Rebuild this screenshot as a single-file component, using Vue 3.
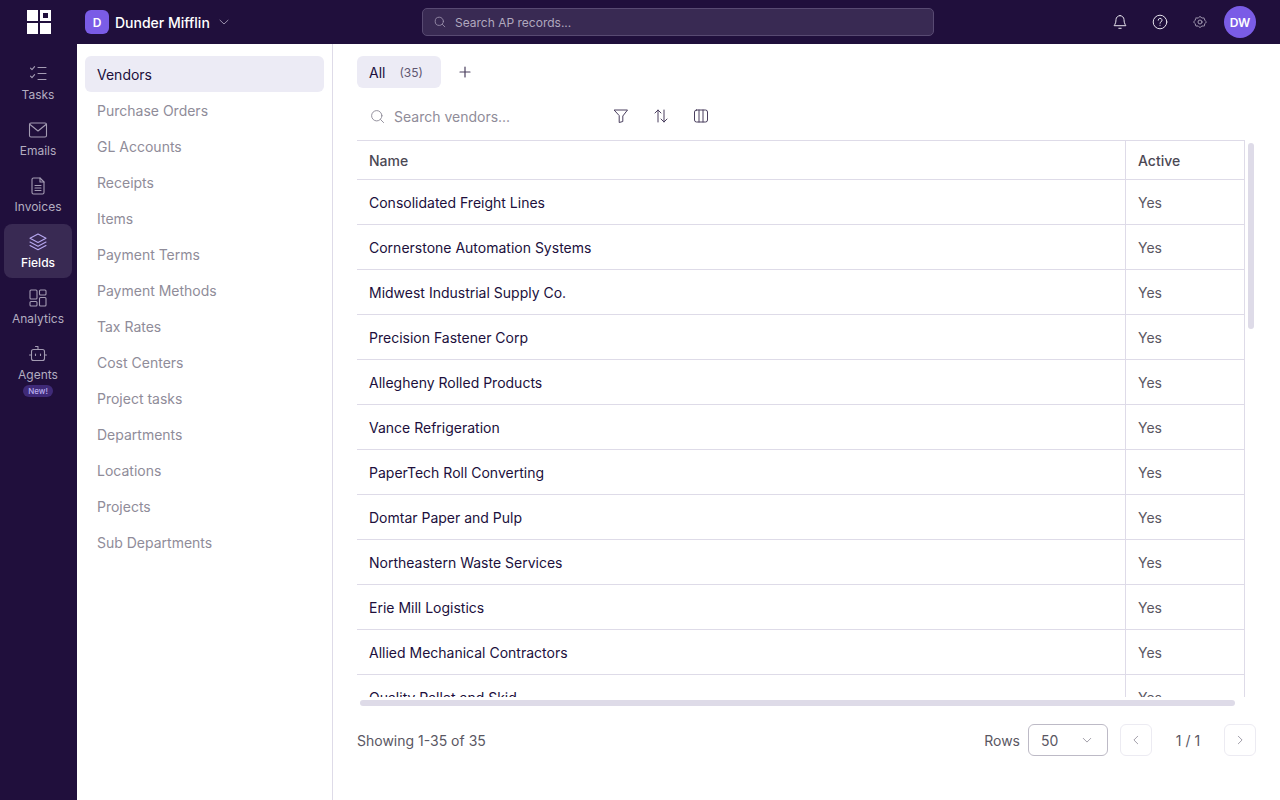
<script setup>
const railItems = [
  { label: "Tasks", icon: "tasks" },
  { label: "Emails", icon: "mail" },
  { label: "Invoices", icon: "doc" },
  { label: "Fields", icon: "layers", active: true },
  { label: "Analytics", icon: "grid" },
  { label: "Agents", icon: "bot", badge: "New!" },
];

const sections = [
  "Vendors",
  "Purchase Orders",
  "GL Accounts",
  "Receipts",
  "Items",
  "Payment Terms",
  "Payment Methods",
  "Tax Rates",
  "Cost Centers",
  "Project tasks",
  "Departments",
  "Locations",
  "Projects",
  "Sub Departments",
];

const vendors = [
  "Consolidated Freight Lines",
  "Cornerstone Automation Systems",
  "Midwest Industrial Supply Co.",
  "Precision Fastener Corp",
  "Allegheny Rolled Products",
  "Vance Refrigeration",
  "PaperTech Roll Converting",
  "Domtar Paper and Pulp",
  "Northeastern Waste Services",
  "Erie Mill Logistics",
  "Allied Mechanical Contractors",
  "Quality Pallet and Skid",
];
</script>

<template>
  <div class="app">
    <header class="topbar">
      <div class="logo-cell">
        <svg class="logo" viewBox="0 0 24 24" aria-hidden="true">
          <rect x="0" y="0" width="11" height="11" fill="#fff" />
          <rect x="13" y="0" width="11" height="11" fill="#fff" />
          <rect x="16" y="3" width="5" height="5" fill="#200f3c" />
          <rect x="0" y="13" width="11" height="11" fill="#fff" />
          <rect x="13" y="13" width="11" height="11" fill="#fff" />
        </svg>
      </div>
      <div class="org">
        <span class="org-badge">D</span>
        <span class="org-name">Dunder Mifflin</span>
        <svg class="org-caret" viewBox="0 0 12 12" aria-hidden="true">
          <path d="M2 4.2 6 8l4-3.8" />
        </svg>
      </div>
      <div class="global-search">
        <svg class="search-icon" viewBox="0 0 16 16" aria-hidden="true">
          <circle cx="7.2" cy="7.2" r="4.7" />
          <path d="M10.7 10.7 13.5 13.5" />
        </svg>
        <span>Search AP records...</span>
      </div>
      <div class="top-actions">
        <svg class="top-icon" viewBox="0 0 16 16" aria-hidden="true">
          <path d="M8 1.6a4 4 0 0 0-4 4c0 1.7-.3 3.6-1.1 4.8-.3.5-.8 1-.8 1.3h11.800c0-.3-.5-.8-.8-1.300C12.300 9.200 12 7.300 12 5.600a4 4 0 0 0-4-4Z" />
          <path d="M6.800 14.300h2.400" />
        </svg>
        <svg class="top-icon" viewBox="0 0 16 16" aria-hidden="true">
          <circle cx="8" cy="8" r="6.800" />
          <path d="M6.200 6.200a1.900 1.900 0 1 1 2.800 1.700c-.6.300-1 .7-1 1.400" />
          <path d="M8 11.200v.2" />
        </svg>
        <svg class="top-icon dim" viewBox="0 0 16 16" aria-hidden="true">
          <circle cx="8" cy="8" r="2" />
          <path d="M8 2.500 10 4h2.200l.6 2.200L14.400 8l-1.600 1.800-.6 2.200H10l-2 1.500L6 12H3.800l-.6-2.200L1.600 8l1.600-1.800L3.800 4H6Z" stroke-dasharray="2 1" />
        </svg>
        <span class="avatar">DW</span>
      </div>
    </header>

    <div class="body">
      <nav class="rail">
        <a
          v-for="item in railItems"
          :key="item.label"
          class="rail-item"
          :class="{ active: item.active }"
        >
          <svg class="rail-icon" viewBox="0 0 20 20" aria-hidden="true">
            <template v-if="item.icon === 'tasks'">
              <path d="M2.500 4.200 4 5.700l2.600-3M2.500 12.200 4 13.700l2.600-3" />
              <path d="M10 3.500h8M10 9.500h8M10 15.500h8" />
            </template>
            <template v-else-if="item.icon === 'mail'">
              <rect x="1.500" y="3" width="17" height="14" rx="1.500" />
              <path d="M2 4.500 10 11l8-6.500" />
            </template>
            <template v-else-if="item.icon === 'doc'">
              <path d="M4 3.500A1.500 1.500 0 0 1 5.500 2H12l4 4v10.500a1.500 1.500 0 0 1-1.500 1.500h-9A1.500 1.500 0 0 1 4 16.500Z" />
              <path d="M12 2v4h4M7 9.500h6M7 12h6M7 14.500h6" />
            </template>
            <template v-else-if="item.icon === 'layers'">
              <path d="M10 2 18 6.200 10 10.400 2 6.200Z" />
              <path d="M2 10 10 14.200 18 10M2 13.600 10 17.800 18 13.600" />
            </template>
            <template v-else-if="item.icon === 'grid'">
              <rect x="2" y="2" width="7" height="9" rx="1" />
              <rect x="11.500" y="2" width="6.500" height="5" rx="1" />
              <rect x="2" y="13.500" width="7" height="4.500" rx="1" />
              <rect x="11.500" y="9.500" width="6.500" height="8.500" rx="1" />
            </template>
            <template v-else>
              <path d="M10 2.500v3M7.500 2.500H10" />
              <rect x="3.500" y="5.500" width="13" height="11" rx="2" />
              <path d="M1.500 11h2M16.500 11h2M7.500 10v1.500M12.500 10v1.500" />
            </template>
          </svg>
          <span class="rail-label">{{ item.label }}</span>
          <span v-if="item.badge" class="rail-badge">{{ item.badge }}</span>
        </a>
      </nav>

      <aside class="sections">
        <a
          v-for="(name, i) in sections"
          :key="name"
          class="section-link"
          :class="{ active: i === 0 }"
        >{{ name }}</a>
      </aside>

      <main class="main">
        <div class="tabs">
          <div class="tab">
            <span class="tab-name">All</span>
            <span class="tab-count">(35)</span>
          </div>
          <svg class="plus" viewBox="0 0 12 12" aria-hidden="true">
            <path d="M6 1v10M1 6h10" />
          </svg>
        </div>

        <div class="toolbar">
          <div class="table-search">
            <svg class="table-search-icon" viewBox="0 0 16 16" aria-hidden="true">
              <circle cx="7.200" cy="7.200" r="5.500" />
              <path d="M11.200 11.200 14.500 14.500" />
            </svg>
            <span>Search vendors...</span>
          </div>
          <div class="tools">
            <svg class="tool" viewBox="0 0 16 16" aria-hidden="true">
              <path d="M1.500 2h13L9.800 8v5.500l-3.600 1V8Z" />
            </svg>
            <svg class="tool" viewBox="0 0 16 16" aria-hidden="true">
              <path d="M5 14V2M2 5l3-3 3 3M11 2v12M8 11l3 3 3-3" />
            </svg>
            <svg class="tool" viewBox="0 0 16 16" aria-hidden="true">
              <rect x="1.500" y="2" width="13" height="12" rx="2" />
              <path d="M6 2v12M10 2v12" />
            </svg>
          </div>
        </div>

        <div class="table-wrap">
          <div class="table-scroll">
            <table class="table">
              <thead>
                <tr>
                  <th>Name</th>
                  <th class="col-active">Active</th>
                </tr>
              </thead>
              <tbody>
                <tr v-for="v in vendors" :key="v">
                  <td>{{ v }}</td>
                  <td class="col-active yes">Yes</td>
                </tr>
              </tbody>
            </table>
          </div>
          <div class="bar-v"></div>
          <div class="bar-h"></div>
        </div>

        <footer class="pager">
          <span class="showing">Showing 1-35 of 35</span>
          <div class="pager-right">
            <span class="rows-label">Rows</span>
            <div class="rows-select">
              <span>50</span>
              <svg class="chev" viewBox="0 0 12 12" aria-hidden="true">
                <path d="M1.500 4 6 8.500 10.500 4" />
              </svg>
            </div>
            <button class="page-btn" type="button">
              <svg class="chev" viewBox="0 0 12 12" aria-hidden="true">
                <path d="M8 1.500 3.500 6 8 10.500" />
              </svg>
            </button>
            <span class="page-num">1 / 1</span>
            <button class="page-btn" type="button">
              <svg class="chev" viewBox="0 0 12 12" aria-hidden="true">
                <path d="M4 1.500 8.500 6 4 10.500" />
              </svg>
            </button>
          </div>
        </footer>
      </main>
    </div>
  </div>
</template>

<style>
html,
body {
  margin: 0;
  background: #fff;
}
</style>

<style scoped>
.app {
  width: 1280px;
  height: 800px;
  display: flex;
  flex-direction: column;
  overflow: hidden;
  font-family: Inter, "Liberation Sans", sans-serif;
  font-size: 14px;
  color: #200f3c;
}

svg {
  fill: none;
  stroke: currentColor;
  stroke-linecap: round;
  stroke-linejoin: round;
  flex: none;
}

.topbar {
  height: 44px;
  flex: none;
  display: flex;
  align-items: center;
  background: #200f3c;
  color: #fff;
  padding-right: 24px;
}

.logo-cell {
  width: 77px;
  flex: none;
  display: flex;
  justify-content: center;
}

.logo {
  width: 24px;
  height: 24px;
  stroke: none;
}

.logo rect {
  stroke: none;
}

.org {
  width: 329px;
  flex: none;
  padding-left: 8px;
  display: flex;
  align-items: center;
  gap: 6px;
}

.org-badge {
  width: 24px;
  height: 24px;
  border-radius: 6px;
  background: #7a5ce6;
  display: flex;
  align-items: center;
  justify-content: center;
  font-size: 12px;
  font-weight: 600;
}

.org-name {
  font-weight: 500;
  font-size: 14px;
}

.org-caret {
  width: 12px;
  height: 12px;
  margin-left: 2px;
  color: #9a90ac;
  stroke-width: 1;
}

.global-search {
  margin-left: 8px;
  width: 512px;
  height: 28px;
  box-sizing: border-box;
  background: #392a53;
  border: 1px solid #584a72;
  border-radius: 5px;
  display: flex;
  align-items: center;
  padding-left: 10px;
  gap: 8px;
  font-size: 12px;
  color: #b0a8be;
}

.search-icon {
  width: 14px;
  height: 14px;
  color: #9a90ac;
  stroke-width: 1;
}

.top-actions {
  margin-left: auto;
  display: flex;
  align-items: center;
  gap: 24px;
}

.top-icon {
  width: 16px;
  height: 16px;
  color: #e6e3ec;
  stroke-width: 1;
}

.top-icon.dim {
  color: #a49cb3;
}

.avatar {
  width: 32px;
  height: 32px;
  margin-left: -8px;
  border-radius: 50%;
  background: #7a5ce6;
  display: flex;
  align-items: center;
  justify-content: center;
  font-size: 12px;
  font-weight: 600;
}

.body {
  flex: 1;
  min-height: 0;
  display: flex;
}

.rail {
  width: 77px;
  flex: none;
  box-sizing: border-box;
  background: #200f3c;
  padding: 12px 5px 0 4px;
  display: flex;
  flex-direction: column;
  gap: 2px;
}

.rail-item {
  height: 54px;
  border-radius: 8px;
  display: flex;
  flex-direction: column;
  align-items: center;
  padding-top: 8px;
  box-sizing: border-box;
  color: #b3adc0;
}

.rail-item.active {
  background: #392a53;
  color: #fff;
}

.rail-icon {
  width: 20px;
  height: 20px;
  color: #a49cb3;
  stroke-width: 1.100;
}

.rail-item.active .rail-icon {
  color: #b7a8f0;
}

.rail-label {
  font-size: 12px;
  line-height: 16px;
  margin-top: 3px;
}

.rail-item.active .rail-label {
  font-weight: 500;
}

.rail-badge {
  margin-top: 2px;
  padding: 0 5px;
  height: 12px;
  line-height: 12px;
  border-radius: 6px;
  background: #3f2a78;
  color: #b9aef0;
  font-size: 8px;
  font-weight: 500;
}

.sections {
  width: 256px;
  flex: none;
  box-sizing: border-box;
  border-right: 1px solid #dedbe8;
  padding: 12px 8px;
  display: flex;
  flex-direction: column;
}

.section-link {
  height: 36px;
  flex: none;
  border-radius: 6px;
  padding-left: 12px;
  display: flex;
  align-items: center;
  color: #8f8c99;
}

.section-link.active {
  background: #ecebf5;
  color: #200f3c;
}

.main {
  flex: 1;
  min-width: 0;
  padding: 12px 24px 0;
  display: flex;
  flex-direction: column;
}

.tabs {
  height: 32px;
  flex: none;
  display: flex;
  align-items: center;
  gap: 18px;
}

.tab {
  width: 84px;
  height: 32px;
  box-sizing: border-box;
  padding-left: 12px;
  background: #ecebf5;
  border-radius: 6px;
  display: flex;
  align-items: center;
  gap: 14px;
}

.tab-count {
  font-size: 12px;
  color: #5f5670;
}

.plus {
  width: 12px;
  height: 12px;
  color: #4a3f5e;
  stroke-width: 1.200;
}

.toolbar {
  height: 40px;
  margin-top: 8px;
  flex: none;
  display: flex;
  align-items: center;
  padding-left: 13px;
}

.table-search {
  width: 243px;
  flex: none;
  display: flex;
  align-items: center;
  gap: 9px;
  color: #8f8c99;
}

.table-search-icon {
  width: 15px;
  height: 15px;
  color: #8f8c99;
  stroke-width: 1;
}

.tools {
  display: flex;
  align-items: center;
  gap: 24px;
}

.tool {
  width: 16px;
  height: 16px;
  color: #4a3f5e;
  stroke-width: 1;
}

.table-wrap {
  position: relative;
  height: 568px;
  margin-top: 4px;
  flex: none;
}

.table-scroll {
  width: 888px;
  height: 557px;
  overflow: hidden;
}

.table {
  width: 888px;
  table-layout: fixed;
  border-collapse: separate;
  border-spacing: 0;
  border-top: 1px solid #dedbe8;
  border-right: 1px solid #dedbe8;
  box-sizing: border-box;
}

th {
  height: 38px;
  padding: 0 12px;
  text-align: left;
  font-weight: 500;
  color: #4b4854;
  border-bottom: 1px solid #dedbe8;
}

td {
  height: 44px;
  padding: 0 12px;
  border-bottom: 1px solid #dedbe8;
}

.col-active {
  width: 119px;
  box-sizing: border-box;
  border-left: 1px solid #dedbe8;
}

.yes {
  color: #5a5763;
}

.bar-v {
  position: absolute;
  left: 891px;
  top: 3px;
  width: 6px;
  height: 186px;
  border-radius: 3px;
  background: #dedbe8;
}

.bar-h {
  position: absolute;
  left: 3px;
  top: 560px;
  width: 875px;
  height: 6px;
  border-radius: 3px;
  background: #dedbe8;
}

.pager {
  height: 32px;
  margin-top: 16px;
  flex: none;
  display: flex;
  align-items: center;
  justify-content: space-between;
}

.showing {
  color: #5a5763;
}

.pager-right {
  display: flex;
  align-items: center;
}

.rows-label {
  color: #5a5763;
  margin-right: 8px;
}

.rows-select {
  width: 80px;
  height: 32px;
  box-sizing: border-box;
  border: 1px solid #bdbac6;
  border-radius: 6px;
  padding: 0 15px 0 12px;
  display: flex;
  align-items: center;
  justify-content: space-between;
  color: #5a5763;
}

.chev {
  width: 10px;
  height: 10px;
  color: #8f8c99;
  stroke-width: 1;
}

.page-btn {
  width: 32px;
  height: 32px;
  padding: 0;
  background: #fff;
  border: 1px solid #ecebf2;
  border-radius: 6px;
  display: flex;
  align-items: center;
  justify-content: center;
}

.rows-select + .page-btn {
  margin-left: 12px;
}

.page-num {
  width: 72px;
  text-align: center;
  color: #5a5763;
}
</style>
